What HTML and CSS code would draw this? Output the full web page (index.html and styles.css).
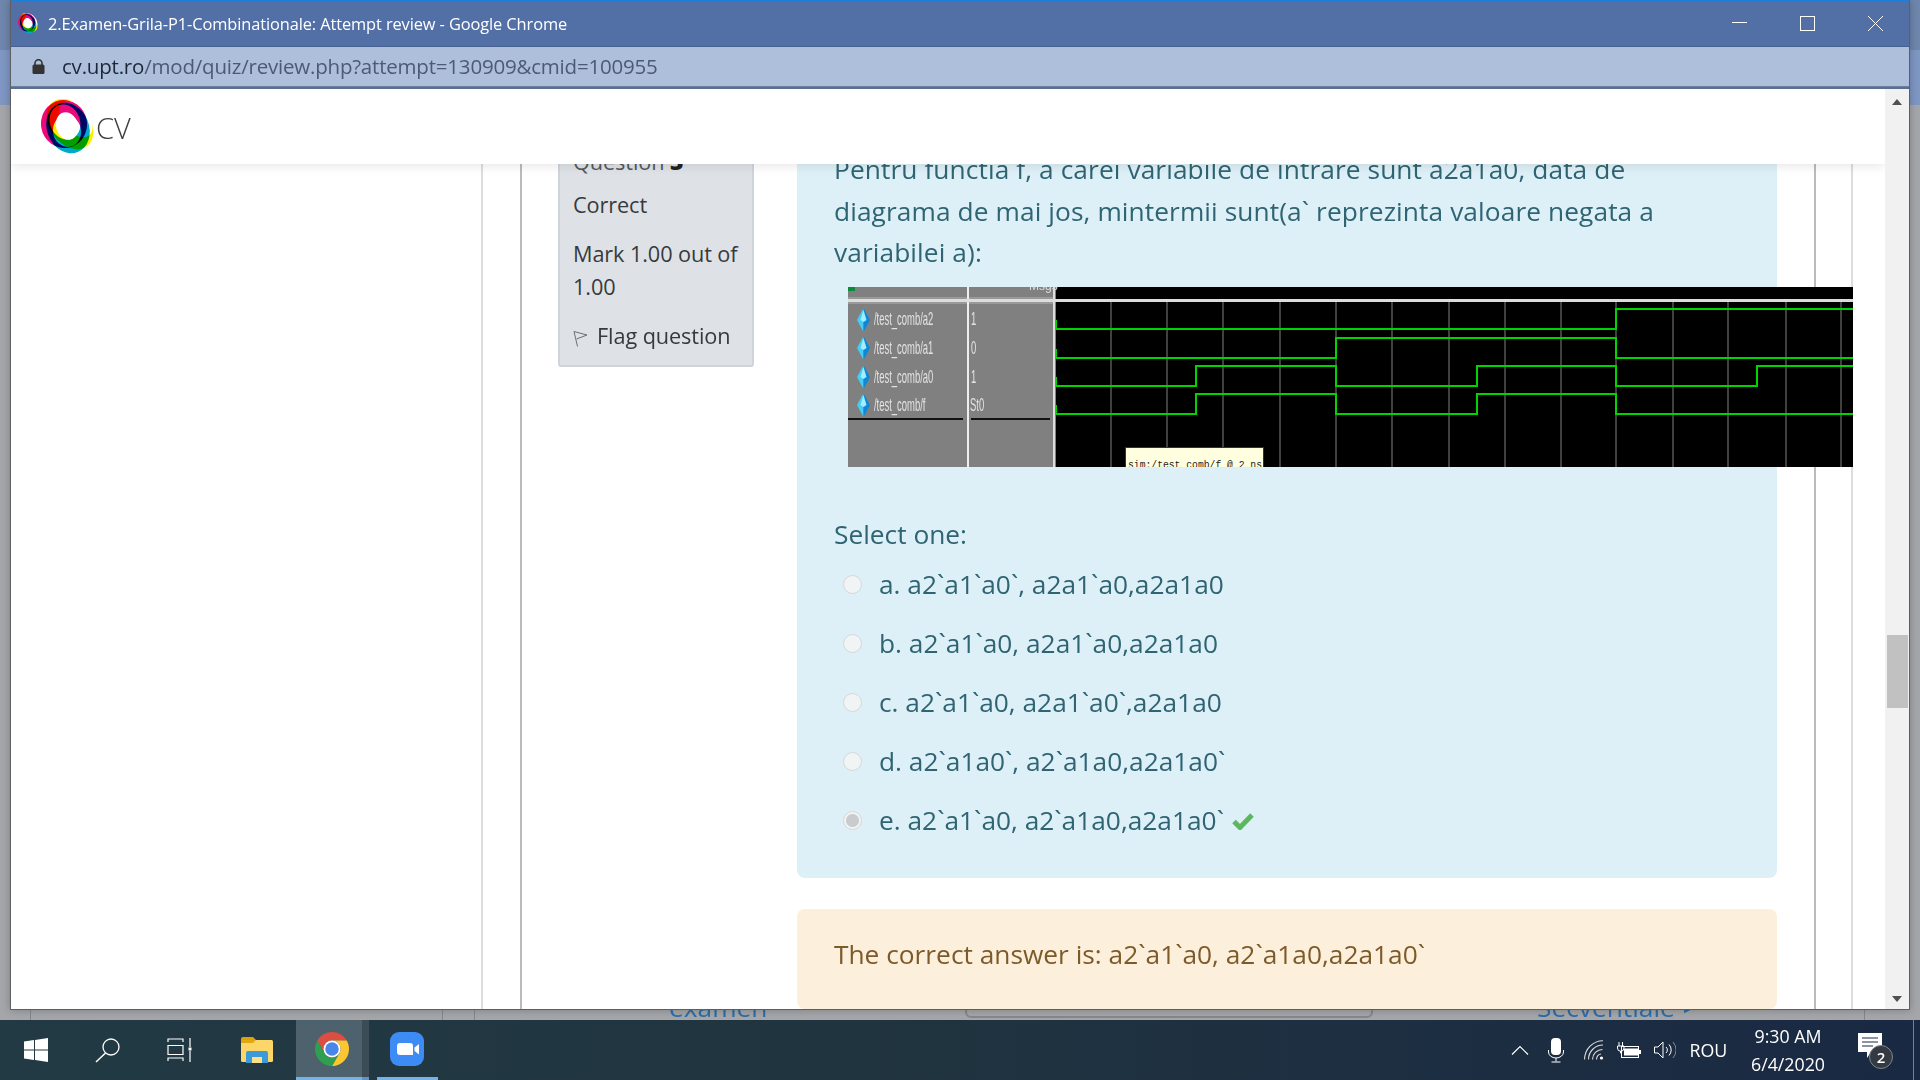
FILE: index.html
```html
<!DOCTYPE html>
<html lang="en">
<head>
    <meta charset="UTF-8" />
    <meta name="viewport" content="width=device-width, initial-scale=1.0" />
    <title>2.Examen-Grila-P1-Combinationale: Attempt review</title>
    <link rel="stylesheet" href="styles.css">
</head>
<body>
    <svg class="defs" width="0" height="0">
        <symbol id="cv-logo" viewBox="0 0 56 56">
            <g class="logo-rings">
                <g class="ring">
                    <ellipse cx="27" cy="29" rx="21" ry="26" fill="#00a9ce" transform="rotate(-22 27 29)" />
                    <ellipse cx="24" cy="23" rx="15" ry="18" fill="#fff" transform="rotate(-22 24 23)" />
                </g>
                <g class="ring">
                    <ellipse cx="23" cy="25" rx="23" ry="24" fill="#ec0a7a" transform="rotate(-10 23 25)" />
                    <ellipse cx="26" cy="32" rx="14" ry="16" fill="#fff" transform="rotate(-10 26 32)" />
                </g>
                <g class="ring">
                    <ellipse cx="29" cy="25" rx="20" ry="28" fill="#ffee00" transform="rotate(-38 29 25)" />
                    <ellipse cx="35" cy="20" rx="13" ry="21" fill="#fff" transform="rotate(-38 35 20)" />
                </g>
            </g>
            <ellipse cx="26" cy="27" rx="11" ry="14" fill="#fff" transform="rotate(-15 26 27)" />
        </symbol>
    </svg>

    <div class="desktop">
        <div class="behind">
            <span class="behind-line l1"></span>
            <span class="behind-line l2"></span>
            <span class="behind-line l3"></span>
            <span class="behind-line l4"></span>
            <span class="behind-select"></span>
            <span class="behind-link examen">examen</span>
            <span class="behind-link secv">Secventiale <i>&#9658;</i></span>
        </div>
        <div class="strip strip-left"></div>
        <div class="strip strip-right"></div>

        <div class="window">
            <div class="titlebar">
                <svg class="title-icon" viewBox="0 0 56 56"><use href="#cv-logo" /></svg>
                <span class="title-text">2.Examen-Grila-P1-Combinationale: Attempt review - Google Chrome</span>
                <div class="win-controls">
                    <svg width="15" height="15" viewBox="0 0 15 15"><path d="M0 6.500h15" stroke="#fff" fill="none" /></svg>
                    <svg width="15" height="15" viewBox="0 0 15 15"><rect x="0.500" y="0.500" width="14" height="14" stroke="#fff" fill="none" /></svg>
                    <svg width="15" height="15" viewBox="0 0 15 15"><path d="M0 0l15 15M15 0L0 15" stroke="#fff" fill="none" /></svg>
                </div>
            </div>
            <div class="addressbar">
                <svg class="lock" width="13" height="15" viewBox="0 0 13 15"><path d="M3 6V4.200a3.500 3.500 0 0 1 7 0V6" fill="none" stroke="#333" stroke-width="1.600" /><rect x="0.500" y="5.500" width="12" height="9.500" rx="1.500" fill="#333" /></svg>
                <span class="url"><b>cv.upt.ro</b>/mod/quiz/review.php?attempt=130909&amp;cmid=100955</span>
            </div>

            <div class="browser">
                <div class="viewport">
                    <header class="site-header">
                        <svg class="site-logo" viewBox="0 0 56 56"><use href="#cv-logo" /></svg>
                        <span class="site-name">CV</span>
                    </header>

                    <div class="outer-col">
                        <div class="inner-col">
                            <div class="question">
                                <aside class="info">
                                    <p class="q-no">Question <b>3</b></p>
                                    <p class="q-state">Correct</p>
                                    <p class="q-grade">Mark 1.00 out of 1.00</p>
                                    <p class="q-flag">
                                        <svg width="15" height="17" viewBox="0 0 15 17"><path d="M1 1.500l13 3.500-10.500 4M1 1.500L4.500 16.500" fill="none" stroke="#6b6f73" /></svg>
                                        Flag question
                                    </p>
                                </aside>
                                <div class="content">
                                    <section class="formulation">
                                        <p class="q-text">Pentru functia f, a carei variabile de intrare sunt a2a1a0, data de diagrama de mai jos, mintermii sunt(a` reprezinta valoare negata a variabilei a):</p>
                                        <svg class="wave" width="1005" height="180" viewBox="0 0 1005 180">
                                            <defs>
                                                <g id="diamond">
                                                    <path d="M0-12L-6.500 0 0 12z" fill="#45cdf7" />
                                                    <path d="M0-12L6.500 0 0 12z" fill="#0c88d8" />
                                                    <path d="M0-10L-3 0 0 2 3 0z" fill="#a6ecff" />
                                                </g>
                                            </defs>
                                            <rect width="1005" height="180" fill="#000" />
                                            <rect width="208" height="180" fill="#808080" />
                                            <rect width="7" height="4" fill="#0a8a3a" />
                                            <rect y="10" width="207" height="7" fill="#999" />
                                            <rect x="119" width="2" height="180" fill="#eee" />
                                            <rect x="205" width="2" height="180" fill="#ddd" />
                                            <rect y="12" width="1005" height="3" fill="#ddd" />
                                            <text x="181" y="3" class="wv-head">Msgs</text>
                                            <g class="grid">
                                                <path d="M263 15v165M319 15v165M375 15v165M432 15v165M488 15v165M544 15v165M601 15v165M657 15v165M713 15v165M768 15v165M825 15v165M880 15v165M938 15v165M993 15v165" />
                                            </g>
                                            <use href="#diamond" x="15.500" y="33" />
                                            <use href="#diamond" x="15.500" y="61" />
                                            <use href="#diamond" x="15.500" y="90" />
                                            <use href="#diamond" x="15.500" y="118" />
                                            <g class="wv-text">
                                                <text transform="translate(26 38) scale(.525 1)">/test_comb/a2</text>
                                                <text transform="translate(26 67) scale(.525 1)">/test_comb/a1</text>
                                                <text transform="translate(26 96) scale(.525 1)">/test_comb/a0</text>
                                                <text transform="translate(26 124) scale(.525 1)">/test_comb/f</text>
                                                <text transform="translate(123 38) scale(.525 1)">1</text>
                                                <text transform="translate(123 67) scale(.525 1)">0</text>
                                                <text transform="translate(123 96) scale(.525 1)">1</text>
                                                <text transform="translate(122 124) scale(.525 1)">St0</text>
                                            </g>
                                            <path d="M0 132h115M123 132h79" stroke="#111" stroke-width="2" fill="none" />
                                            <g class="signals">
                                                <path d="M208 33V42H768V22H1005" />
                                                <path d="M208 62V71H488V51H768V71H1005" />
                                                <path d="M208 90V99H348V79H488V99H629V79H768V99H909V79H1005" />
                                                <path d="M208 118V127H348V107H488V127H629V107H768V127H1005" />
                                            </g>
                                            <rect x="277.500" y="160.500" width="138" height="24" fill="#ffffe0" stroke="#333" />
                                            <text x="280" y="181" class="wv-tip" textLength="134" lengthAdjust="spacingAndGlyphs">sim:/test_comb/f @ 2 ns</text>
                                        </svg>
                                        <p class="select-one">Select one:</p>
                                        <div class="answers">
                                            <label class="answer"><span class="radio"></span>a. a2`a1`a0`, a2a1`a0,a2a1a0</label>
                                            <label class="answer"><span class="radio"></span>b. a2`a1`a0, a2a1`a0,a2a1a0</label>
                                            <label class="answer"><span class="radio"></span>c. a2`a1`a0, a2a1`a0`,a2a1a0</label>
                                            <label class="answer"><span class="radio"></span>d. a2`a1a0`, a2`a1a0,a2a1a0`</label>
                                            <label class="answer"><span class="radio checked"></span>e. a2`a1`a0, a2`a1a0,a2a1a0`
                                                <svg class="tick" width="22" height="18" viewBox="0 0 22 18"><path d="M2 9.500l6 6L20 3" fill="none" stroke="#5cb85c" stroke-width="5" /></svg>
                                            </label>
                                        </div>
                                    </section>
                                    <section class="feedback">The correct answer is: a2`a1`a0, a2`a1a0,a2a1a0`</section>
                                </div>
                            </div>
                        </div>
                    </div>
                </div>
                <div class="scrollbar">
                    <span class="arrow arrow-up"></span>
                    <span class="thumb"></span>
                    <span class="arrow arrow-down"></span>
                </div>
            </div>
        </div>
    </div>

    <footer class="taskbar">
        <div class="task-left">
            <span class="task-item start">
                <svg width="24" height="24" viewBox="0 0 24 24"><path d="M0 3.500l10-1.400v9.300H0zM11 2l13-2v11.400H11zM0 12.600h10v9.300l-10-1.400zM11 12.600h13V24l-13-2z" fill="#fff" /></svg>
            </span>
            <span class="task-item search">
                <svg width="26" height="26" viewBox="0 0 26 26"><circle cx="16" cy="10" r="8" fill="none" stroke="#fff" stroke-width="1.300" /><path d="M10.500 16L1 25" stroke="#fff" stroke-width="1.500" /></svg>
            </span>
            <span class="task-item view">
                <svg width="26" height="24" viewBox="0 0 26 24"><path d="M1 4V1h15v3M1 7.500h15v9H1zM1 23v-3h15v3M23 0v9M23 13v11" fill="none" stroke="#fff" stroke-width="1.200" /><rect x="21.500" y="9.500" width="3" height="3" fill="#fff" /></svg>
            </span>
            <span class="task-item explorer">
                <svg width="32" height="27" viewBox="0 0 32 27"><path d="M0 2a2 2 0 0 1 2-2h10l3 3h-15z" fill="#d9a20a" /><rect y="3" width="32" height="22" rx="1.500" fill="#fcd768" /><path d="M0 3h15l-3 3H0z" fill="#e2a90f" /><path d="M5 26V16a2 2 0 0 1 2-2h18a2 2 0 0 1 2 2v10h-6v-6H11v6z" fill="#3d9ad8" /><rect x="11" y="20" width="10" height="6" fill="#fce08a" /></svg>
            </span>
            <span class="task-item chrome active">
                <svg width="34" height="34" viewBox="0 0 48 48">
                    <path d="M3.220 12A24 24 0 0 1 44.780 12H24A12 12 0 0 0 13.600 30z" fill="#db4e41" />
                    <path d="M44.780 12A24 24 0 0 1 24 48L34.400 30A12 12 0 0 0 24 12z" fill="#fbc62f" />
                    <path d="M24 48A24 24 0 0 1 3.220 12L13.600 30A12 12 0 0 0 34.400 30z" fill="#2f9e50" />
                    <circle cx="24" cy="24" r="12" fill="#fff" />
                    <circle cx="24" cy="24" r="9.500" fill="#4a86e8" />
                </svg>
            </span>
            <span class="task-sep"></span>
            <span class="task-item zoom active">
                <svg width="34" height="34" viewBox="0 0 34 34"><rect width="34" height="34" rx="9" fill="#3d8bf5" /><path d="M7 14a3 3 0 0 1 3-3h10a3 3 0 0 1 3 3v9H10a3 3 0 0 1-3-3z" fill="#fff" /><path d="M24.500 15.500L29 12v10.500l-4.500-3.500z" fill="#fff" /></svg>
            </span>
        </div>
        <div class="tray">
            <svg class="tray-chev" width="18" height="10" viewBox="0 0 18 10"><path d="M1 9.500l8-8 8 8" fill="none" stroke="#fff" stroke-width="1.200" /></svg>
            <svg class="tray-mic" width="16" height="25" viewBox="0 0 16 25"><rect x="3" y="0" width="10" height="17" rx="4" fill="#fff" /><path d="M0.500 12v2a7.500 6 0 0 0 15 0v-2M8 20v3.500M3.500 24h9" fill="none" stroke="#fff" /></svg>
            <svg class="tray-wifi" width="20" height="20" viewBox="0 0 20 20"><g fill="none" stroke="#ddd" stroke-width="1.100"><path d="M0.600 19.500C0.600 9 9 0.800 19 0.800" /><path d="M4.500 19.500C4.500 11.500 11 5 19 5" /><path d="M8.500 19.500C8.500 14 13 9.500 18.500 9.500" /><path d="M12.500 19.500C12.500 16.500 14.500 14 17 14" /></g><circle cx="17.500" cy="18" r="1.600" fill="#fff" /></svg>
            <svg class="tray-batt" width="24" height="17" viewBox="0 0 24 17"><rect x="4.500" y="4.500" width="17" height="11" fill="none" stroke="#fff" /><rect x="7" y="6.500" width="14" height="7" fill="#fff" /><rect x="22" y="8" width="2" height="4" fill="#fff" /><path d="M2 0v4M5.500 0v4M0.500 4h6.500v2a3 3 0 0 1-6.500 0zM3.500 9v2h1" fill="none" stroke="#fff" /></svg>
            <svg class="tray-vol" width="22" height="18" viewBox="0 0 22 18"><path d="M0.500 6h3.500l5-5v16l-5-5H0.500z" fill="none" stroke="#fff" /><path d="M12 6a4 4 0 0 1 0 6M15 3.500a8 8 0 0 1 0 11" fill="none" stroke="#fff" /><path d="M19 1a12 12 0 0 1 0 16" fill="none" stroke="#7f8c99" /></svg>
            <span class="tray-lang">ROU</span>
            <div class="tray-clock">
                <span>9:30 AM</span>
                <span>6/4/2020</span>
            </div>
            <div class="tray-notes">
                <svg width="24" height="25" viewBox="0 0 24 25"><path d="M0 0h24v19H13l-4 6v-6H0z" fill="#fff" /><path d="M4 5h16M4 9h16M4 13h11" stroke="#1a2a44" /></svg>
                <span class="badge">2</span>
            </div>
            <span class="tray-edge"></span>
        </div>
    </footer>
</body>
</html>
```

FILE: styles.css
```css
html, body { margin: 0; height: 100%; }
body { width: 1920px; height: 1080px; overflow: hidden; display: flex; flex-direction: column; font-family: "Open Sans", sans-serif; background: #a4a6a9; }
p { margin: 0; }
.defs { position: absolute; }

/* desktop behind the window */
.desktop { height: 1020px; position: relative; overflow: hidden; }
.behind { position: absolute; left: 0; right: 0; bottom: 0; height: 40px; }
.behind-line { position: absolute; top: 0; bottom: 0; width: 1px; background: #85878a; }
.l1 { left: 30px; }
.l2 { left: 442px; }
.l3 { left: 474px; }
.l4 { left: 1864px; }
.behind-select { position: absolute; left: 965px; width: 408px; top: 20px; height: 18px; border: 2px solid #85878a; border-radius: 6px; box-sizing: border-box; }
.behind-link { position: absolute; font-size: 26.3px; color: #2f6da8; line-height: 30px; top: 12px; }
.behind-link i { font-style: normal; font-size: 12px; vertical-align: 4px; color: #2f6da8; }
.examen { left: 669px; }
.secv { left: 1537px; }
.strip { position: absolute; top: 0; width: 11px; height: 105px; background: linear-gradient(#6f86ad 0, #6f86ad 50px, #7f97c4 50px); }
.strip-left { left: 0; }
.strip-right { right: 0; }

/* chrome window */
.window { position: absolute; left: 10px; top: 0; width: 1900px; height: 1010px; display: flex; flex-direction: column; box-sizing: border-box; border: 1px solid #5c5f63; border-top: 0; background: #fff; box-shadow: 0 0 8px rgba(0, 0, 0, 0.25); }
.titlebar { height: 45px; border-top: 1px solid #1a7fd6; border-bottom: 1px solid #46608f; box-sizing: content-box; background: #5370a6; display: flex; align-items: center; color: #fff; }
.title-icon { width: 21px; height: 21px; margin-left: 7px; }
.title-text { margin-left: 9px; font-size: 16.4px; letter-spacing: -0.1px; }
.win-controls { margin-left: auto; display: flex; gap: 53px; margin-right: 26px; align-items: center; }
.addressbar { height: 39px; background: #aebfdc; display: flex; align-items: center; }
.lock { margin-left: 21px; }
.url { margin-left: 17px; font-size: 20.5px; color: #4b5a75; letter-spacing: -0.2px; margin-top: -2px; }
.url b { font-weight: 400; color: #1c2738; }
.browser { flex: 1; min-height: 0; display: flex; border-top: 1px solid #6d7f9f; box-shadow: inset 0 2px 0 #5c6f92; padding-top: 2px; }

/* page */
.viewport { flex: 1; position: relative; overflow: hidden; background: #fff; }
.site-header { position: absolute; left: 0; right: 0; top: 0; height: 75px; background: #fff; box-shadow: 0 2px 10px rgba(0, 0, 0, 0.1); z-index: 2; display: flex; align-items: center; }
.site-logo { width: 56px; height: 56px; margin-left: 30px; }
.site-name { font-size: 29px; color: #3c3f42; font-weight: 300; margin-top: 2px; margin-left: -1px; }
.logo-rings { isolation: isolate; }
.ring { mix-blend-mode: multiply; }

.outer-col { margin-left: 470px; width: 1372px; height: 100%; border-left: 2px solid #ddd; border-right: 2px solid #ddd; box-sizing: border-box; }
.inner-col { margin-left: 37px; width: 1296px; height: 100%; border-left: 2px solid #bbb; border-right: 2px solid #bbb; box-sizing: border-box; }
.question { display: flex; padding-left: 36px; gap: 43px; }
.info { width: 196px; height: 278px; box-sizing: border-box; background: #dee2e6; border: 2px solid #ced4da; border-top: 0; border-radius: 0 0 3px 3px; padding: 56px 13px 0 13px; font-size: 21.7px; line-height: 33px; color: #373a3c; letter-spacing: -0.1px; flex-shrink: 0; }
.q-no { color: #55595c; }
.q-no b { font-size: 23px; font-weight: 800; color: #222; }
.q-state { margin-top: 10px; }
.q-grade { margin-top: 16px; }
.q-flag { margin-top: 16px; display: flex; align-items: center; gap: 9px; }
.q-flag svg { margin-top: 6px; flex-shrink: 0; }

.content { width: 980px; flex-shrink: 0; }
.formulation { background: #def0f7; border-radius: 8px; padding: 60px 37px 28px; color: #2f6473; font-size: 26.3px; line-height: 41.6px; height: 789px; box-sizing: border-box; }
.q-text { letter-spacing: 0.09px; }
.wave { display: block; margin: 13px 0 0 14px; }
.wave text { font-family: "Liberation Sans", sans-serif; }
.wv-text text { font-size: 18px; fill: #e2e2e2; }
.wave .wv-head { font-size: 12px; fill: #ddd; }
.wave .wv-tip { font-family: "Liberation Mono", monospace; font-size: 11.500px; fill: #222; }
.grid path { stroke: #808080; stroke-width: 1; fill: none; }
.signals path { stroke: #00d400; stroke-width: 2; fill: none; }
.select-one { margin-top: 47px; }
.answer { display: flex; align-items: center; height: 59px; }
.radio { width: 19px; height: 19px; margin: 0 17px 0 9px; border-radius: 50%; border: 1px solid #d6d8da; background: #f1f4f5; box-sizing: border-box; flex-shrink: 0; }
.radio.checked { background: radial-gradient(circle, #c9cbce 0 6px, #f1f4f5 7px); }
.tick { margin-left: 8px; }
.feedback { margin-top: 31px; background: #fcefdc; border-radius: 8px; padding: 25px 37px; height: 100px; box-sizing: border-box; color: #7d5a29; font-size: 26.3px; line-height: 41.6px; }

.scrollbar { width: 24px; background: #f1f1f1; position: relative; flex-shrink: 0; }
.arrow { position: absolute; left: 7px; width: 0; height: 0; border-left: 5px solid transparent; border-right: 5px solid transparent; }
.arrow-up { top: 10px; border-bottom: 6px solid #505050; }
.arrow-down { bottom: 7px; border-top: 6px solid #505050; }
.thumb { position: absolute; left: 2px; right: 1px; top: 546px; height: 73px; background: #c1c1c1; }

/* taskbar */
.taskbar { height: 60px; background: linear-gradient(90deg, #223a44 0, #20343f 45%, #1a2943 100%); display: flex; justify-content: space-between; color: #fff; }
.task-left { display: flex; }
.task-item { display: flex; align-items: center; justify-content: center; height: 60px; box-sizing: border-box; }
.start, .search, .view { width: 72px; }
.explorer { width: 80px; padding-left: 2px; }
.chrome { width: 66px; padding-left: 6px; background: #4d626c; border-bottom: 3px solid #74b3e6; }
.task-sep { width: 7px; background: #3c4c57; border-bottom: 3px solid #5c94c4; box-sizing: border-box; height: 60px; }
.zoom { width: 61px; margin-left: 8px; padding-right: 1px; border-bottom: 3px solid #74b3e6; }
.tray { display: flex; align-items: center; position: relative; padding-right: 7px; }
.tray-chev { margin-right: 19px; }
.tray-mic { margin-right: 20px; }
.tray-wifi { margin-right: 13px; }
.tray-batt { margin-right: 13px; }
.tray-vol { margin-right: 13.500px; }
.tray-lang { font-size: 17.8px; margin-right: 23.500px; width: 37px; }
.tray-clock { display: flex; flex-direction: column; align-items: center; font-size: 17.800px; line-height: 28px; margin-right: 32px; width: 76px; white-space: nowrap; }
.tray-notes { position: relative; width: 24px; height: 25px; margin-right: 31px; margin-top: -9px; }
.badge { position: absolute; left: 11px; top: 12px; width: 24px; height: 24px; border-radius: 50%; background: #333a42; border: 1px solid #7f858c; box-sizing: border-box; font-size: 15px; font-weight: 600; line-height: 22px; text-align: center; }
.tray-edge { position: absolute; right: 6px; top: 0; bottom: 0; width: 1px; background: #76808c; }
```
